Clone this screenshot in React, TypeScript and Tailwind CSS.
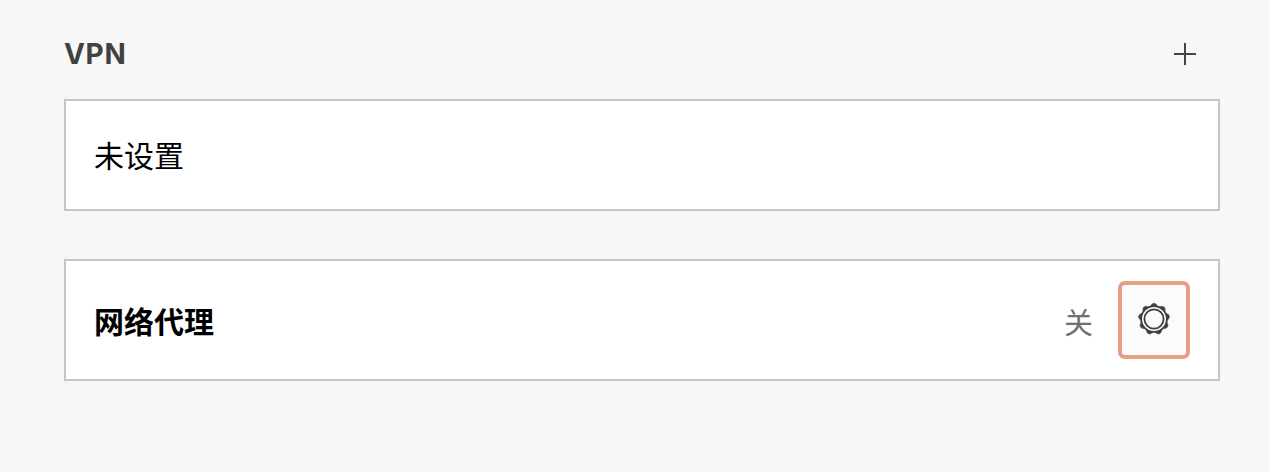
const cardCls = "flex items-center border-2 border-[#c6c6c6] bg-white";
const TEETH = [0, 40, 80, 120, 160, 200, 240, 280, 320];

function PlusIcon() {
  return (
    <svg width="24" height="24" viewBox="0 0 24 24" stroke="#454545" strokeWidth="2" fill="none">
      <path d="M12 1v22M1 12h22" />
    </svg>
  );
}

function GearIcon() {
  return (
    <svg width="34" height="34" viewBox="0 0 34 34" fill="none" stroke="#404040">
      <circle cx="17" cy="17" r="12.9" strokeWidth="1.8" />
      <circle cx="17" cy="17" r="9.6" strokeWidth="1.8" />
      {TEETH.map((angle) => (
        <path key={angle} d="M13.4 4.4L15 2Q17 .6 19 2L20.6 4.4Q17 3.7 13.4 4.4Z"
          fill="#404040" strokeWidth=".5" transform={`rotate(${angle} 17 17)`} />
      ))}
    </svg>
  );
}

export default function App() {
  return (
    <div className="h-[472px] w-[1270px] bg-[#f7f7f7] pt-[30px] pr-[50px] pl-16 font-['Noto_Sans','Noto_Sans_CJK_SC',sans-serif] text-[30px] text-black">
      {/* VPN */}
      <header className="flex h-[69px] items-start justify-between pr-[23px]">
        <h2 className="pt-1 font-['Inter',sans-serif] text-[28px] leading-10 font-bold tracking-[0.7px] text-[#414141]">VPN</h2>
        <button aria-label="添加 VPN" className="mt-3">
          <PlusIcon />
        </button>
      </header>
      <section className={`${cardCls} h-28 pl-7`}>
        <p className="pt-[2px] leading-[44px]">未设置</p>
      </section>

      {/* Network proxy */}
      <section className={`${cardCls} mt-12 h-[122px] justify-between pr-7 pl-7`}>
        <h2 className="pt-1 leading-[44px] font-bold">网络代理</h2>
        <div className="flex items-center gap-[25px]">
          <span className="pt-[6px] text-[29px] leading-[44px] text-[#707070]">关</span>
          <button aria-label="代理设置"
            className="flex h-[78px] w-[72px] items-center justify-center rounded-[7px] border-4 border-[#e89e84] bg-[#fbfbfb] pb-[2px]">
            <GearIcon />
          </button>
        </div>
      </section>
    </div>
  );
}
